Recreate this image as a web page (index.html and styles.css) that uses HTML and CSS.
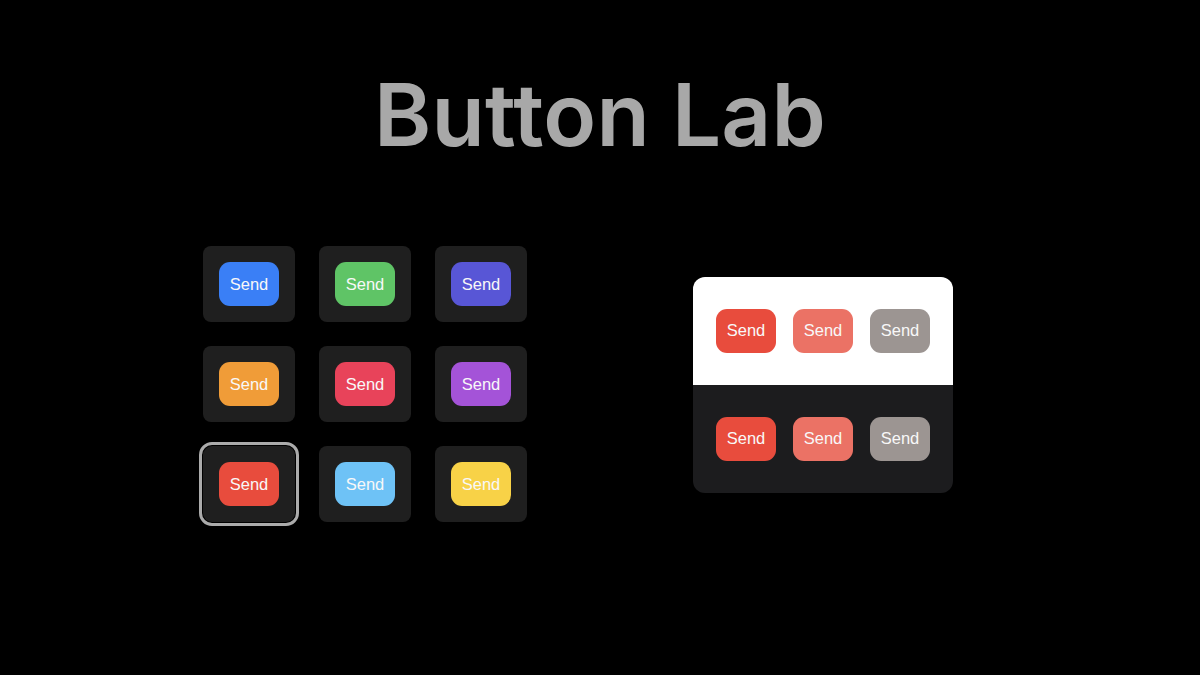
FILE: index.html
```html
<!DOCTYPE html>
<html>
<head>
<meta charset="utf-8">
<link rel="stylesheet" href="styles.css">
</head>
<body>
  <h1 class="title">Button Lab</h1>
  <main class="stage">
    <section class="grid">
      <div class="tile"><button class="btn blue">Send</button></div>
      <div class="tile"><button class="btn green">Send</button></div>
      <div class="tile"><button class="btn indigo">Send</button></div>
      <div class="tile"><button class="btn orange">Send</button></div>
      <div class="tile"><button class="btn pink">Send</button></div>
      <div class="tile"><button class="btn purple">Send</button></div>
      <div class="tile selected"><button class="btn red">Send</button></div>
      <div class="tile"><button class="btn sky">Send</button></div>
      <div class="tile"><button class="btn yellow">Send</button></div>
    </section>
    <section class="panel">
      <div class="panel-row light">
        <button class="btn red">Send</button>
        <button class="btn salmon">Send</button>
        <button class="btn taupe">Send</button>
      </div>
      <div class="panel-row dark">
        <button class="btn red">Send</button>
        <button class="btn salmon">Send</button>
        <button class="btn taupe">Send</button>
      </div>
    </section>
  </main>
</body>
</html>
```
FILE: styles.css
```css
html, body {
  margin: 0;
  padding: 0;
  background: #000;
  width: 1200px;
  height: 675px;
  overflow: hidden;
}

body {
  font-family: "Liberation Sans", Arial, sans-serif;
}

.title {
  margin: 69px 0 0 0;
  font-family: Inter, "Liberation Sans", sans-serif;
  font-size: 87px;
  line-height: 92px;
  font-weight: 600;
  letter-spacing: 0.2px;
  font-variant-ligatures: none;
  font-feature-settings: "liga" 0, "calt" 0;
  color: #a8a8a8;
  text-align: center;
}

.stage {
  display: flex;
  align-items: center;
  gap: 166px;
  margin-top: 85px;
  padding-left: 203px;
}

.grid {
  display: grid;
  grid-template-columns: repeat(3, 92px);
  grid-auto-rows: 76px;
  gap: 24px;
}

.tile {
  background: #1f1f1f;
  border-radius: 8px;
  display: flex;
  align-items: center;
  justify-content: center;
}

.tile.selected {
  outline: 3px solid #ababab;
  outline-offset: 1px;
  border-radius: 9px;
}

.btn {
  width: 60px;
  height: 44px;
  border: none;
  border-radius: 11px;
  padding: 0;
  color: #f8f8f8;
  font-family: "Liberation Sans", Arial, sans-serif;
  font-size: 16.5px;
  display: flex;
  align-items: center;
  justify-content: center;
}

.blue { background: #3a7ff6; }
.green { background: #5fc466; }
.indigo { background: #5856d6; }
.orange { background: #f09c38; }
.pink { background: #e8435a; }
.purple { background: #a453d8; }
.red { background: #e84c3d; }
.sky { background: #6ec2f6; }
.yellow { background: #f8d247; }
.salmon { background: #eb7265; }
.taupe { background: #9c9592; }

.panel {
  width: 260px;
  border-radius: 12px;
  overflow: hidden;
  margin-top: 1px;
}

.panel-row {
  height: 108px;
  display: flex;
  align-items: center;
  gap: 17px;
  padding: 0 23px;
}

.panel-row.light { background: #fff; }
.panel-row.dark { background: #1c1c1e; }
```
